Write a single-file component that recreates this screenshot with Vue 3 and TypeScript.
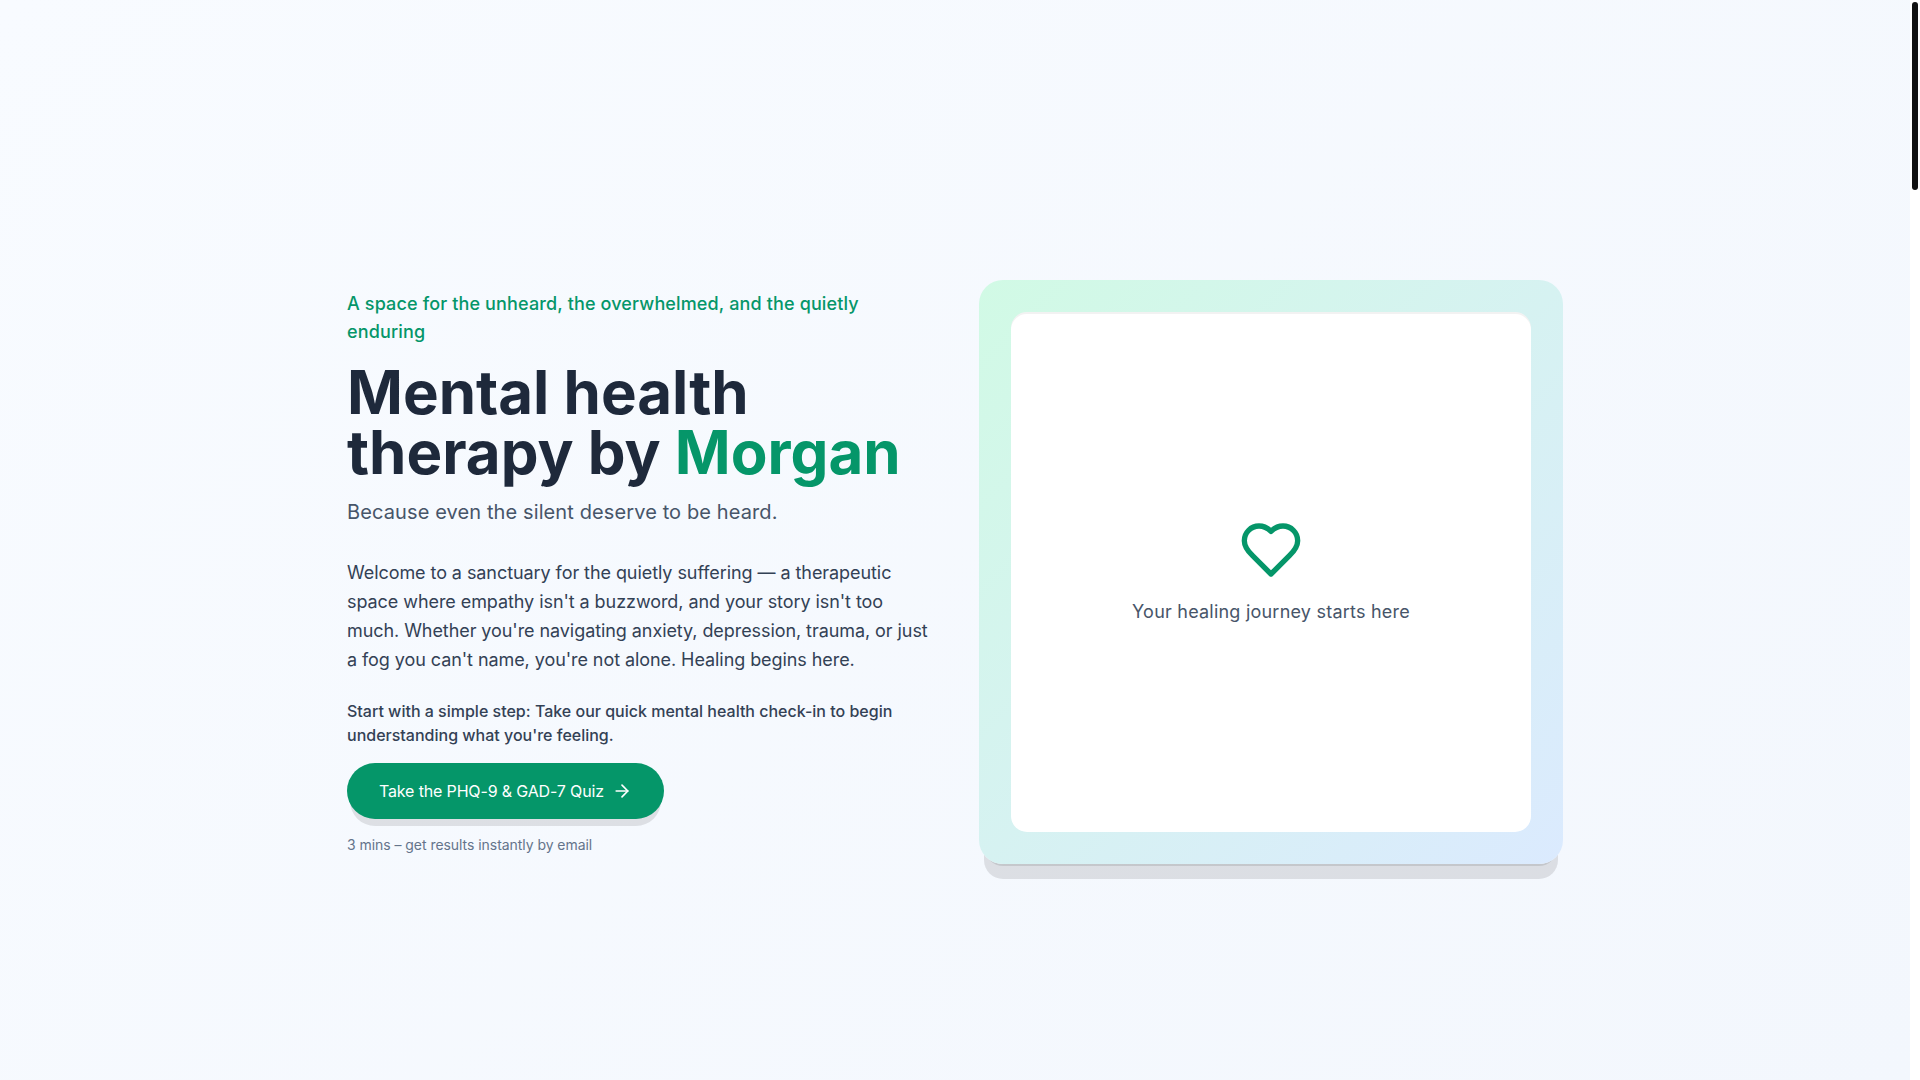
<script setup lang="ts">
const heartPath =
  'M19 14c1.49-1.46 3-3.21 3-5.5A5.5 5.5 0 0 0 16.5 3c-1.76 0-3 .5-4.5 2-1.5-1.5-2.74-2-4.5-2A5.5 5.5 0 0 0 2 8.5c0 2.3 1.5 4.05 3 5.5l7 7Z'
</script>

<template>
  <div class="page">
    <section class="hero">
      <div class="hero-inner">
        <div class="copy">
          <p class="tagline">A space for the unheard, the overwhelmed, and the quietly enduring</p>
          <h1>Mental health therapy by <span class="name">Morgan</span></h1>
          <p class="subtitle">Because even the silent deserve to be heard.</p>
          <p class="welcome">
            Welcome to a sanctuary for the quietly suffering — a therapeutic space where empathy isn't a
            buzzword, and your story isn't too much. Whether you're navigating anxiety, depression, trauma,
            or just a fog you can't name, you're not alone. Healing begins here.
          </p>
          <p class="step">
            Start with a simple step: Take our quick mental health check-in to begin understanding what
            you're feeling.
          </p>
          <a class="cta" href="#">
            Take the PHQ-9 &amp; GAD-7 Quiz
            <svg viewBox="0 0 24 24" width="20" height="20" fill="none" stroke="currentColor"
              stroke-width="2" stroke-linecap="round" stroke-linejoin="round">
              <path d="M5 12h14" />
              <path d="m12 5 7 7-7 7" />
            </svg>
          </a>
          <p class="note">3 mins – get results instantly by email</p>
        </div>

        <div class="visual">
          <div class="visual-inner">
            <svg viewBox="0 0 24 24" width="64" height="64" fill="none" stroke="#059669" stroke-width="2"
              stroke-linecap="round" stroke-linejoin="round">
              <path :d="heartPath" />
            </svg>
            <p class="visual-text">Your healing journey starts here</p>
          </div>
        </div>
      </div>
    </section>
    <aside class="scrollbar">
      <div class="thumb"></div>
    </aside>
  </div>
</template>

<style scoped>
.page {
  height: 100vh;
  display: flex;
  font-family: Inter, "Liberation Sans", sans-serif;
  background: #fff;
}

.hero {
  flex: 1;
  box-sizing: border-box;
  padding-top: 64px;
  display: flex;
  align-items: center;
  background: linear-gradient(135deg, #f8fbff 0%, #f3f7fd 100%);
}

.hero-inner {
  width: 1280px;
  box-sizing: border-box;
  margin: 0 auto;
  padding: 0 32px;
  display: grid;
  grid-template-columns: 1fr 1fr;
  column-gap: 48px;
  align-items: center;
}

.copy {
  display: flex;
  flex-direction: column;
  align-items: flex-start;
}

p,
h1 {
  margin: 0;
}

.tagline {
  font-size: 18px;
  line-height: 28px;
  font-weight: 500;
  letter-spacing: 0.14px;
  color: #059669;
}

h1 {
  margin-top: 16px;
  font-size: 60px;
  line-height: 60px;
  font-weight: 700;
  color: #1e293b;
}

.name {
  color: #059669;
}

.subtitle {
  margin-top: 16px;
  font-size: 20px;
  line-height: 28px;
  letter-spacing: 0.11px;
  color: #475569;
}

.welcome {
  margin-top: 32px;
  font-size: 18px;
  line-height: 29.25px;
  letter-spacing: -0.07px;
  color: #334155;
}

.step {
  margin-top: 24px;
  font-size: 16px;
  line-height: 24px;
  font-weight: 500;
  color: #334155;
}

.cta {
  margin-top: 16px;
  height: 56px;
  padding: 0 32px;
  display: inline-flex;
  align-items: center;
  gap: 8px;
  border-radius: 9999px;
  background: #059669;
  color: #fff;
  font-size: 16px;
  font-weight: 400;
  letter-spacing: -0.15px;
  text-decoration: none;
  box-shadow: 0 10px 0 -3px rgba(0, 0, 0, 0.1), 0 4px 0 -4px rgba(0, 0, 0, 0.1);
}

.note {
  margin-top: 16px;
  font-size: 14px;
  line-height: 20px;
  letter-spacing: -0.05px;
  color: #64748b;
}

.visual {
  aspect-ratio: 1;
  box-sizing: border-box;
  padding: 32px;
  border-radius: 24px;
  background: linear-gradient(135deg, #d1fae5, #dbeafe);
  box-shadow: 0 20px 0 -5px rgba(0, 0, 0, 0.1), 0 8px 0 -6px rgba(0, 0, 0, 0.1);
}

.visual-inner {
  height: 100%;
  display: flex;
  flex-direction: column;
  align-items: center;
  justify-content: center;
  border-radius: 16px;
  background: #fff;
  box-shadow: inset 0 2px 0 rgba(0, 0, 0, 0.05);
}

.visual-text {
  margin-top: 16px;
  font-size: 18px;
  line-height: 28px;
  font-weight: 400;
  letter-spacing: 0.22px;
  color: #475569;
}

.scrollbar {
  width: 10px;
  flex-shrink: 0;
  background: #fff;
}

.thumb {
  width: 6px;
  height: 188px;
  margin: 2px auto 0;
  border-radius: 3px;
  background: #111;
}
</style>
